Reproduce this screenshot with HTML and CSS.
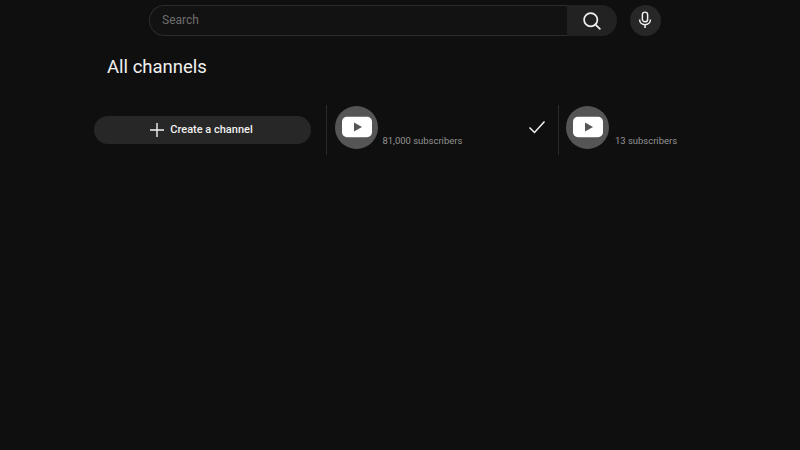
FILE: index.html
```html
<!DOCTYPE html>
<html lang="en">
<head>
<meta charset="utf-8">
<title>All channels</title>
<link rel="stylesheet" href="styles.css">
</head>
<body>
<header class="masthead">
  <div class="searchbox">
    <div class="search-input">Search</div>
    <button class="search-btn" aria-label="Search">
      <svg width="19" height="19" viewBox="0 0 20 20" fill="none" stroke="#f1f1f1" stroke-width="1.8"><circle cx="9.2" cy="9.2" r="7"/><path d="M14 14l4.8 4.8" stroke-linecap="round"/></svg>
    </button>
  </div>
  <button class="mic-btn" aria-label="Voice search">
    <svg width="14" height="18" viewBox="0 0 16 20" fill="none" stroke="#f1f1f1" stroke-width="1.7"><rect x="5" y="1" width="6" height="11" rx="3"/><path d="M1.8 9.5c0 3.4 2.7 5.8 6.2 5.8s6.2-2.4 6.2-5.8M8 15.3V19" /></svg>
  </button>
</header>
<main class="content">
  <h1 class="title">All channels</h1>
  <div class="channels">
    <div class="create-col">
      <button class="create-btn">
        <svg width="16" height="16" viewBox="0 0 16 16" stroke="#f1f1f1" stroke-width="1.4"><path d="M8 1v14M1 8h14"/></svg>
        <span class="create-label">Create a channel</span>
      </button>
    </div>
    <div class="channel channel-wide">
      <div class="avatar">
        <svg width="30" height="22" viewBox="0 0 30 22"><rect width="30" height="20.5" y="0.7" rx="5" fill="#fff"/><path d="M12 6.5l8 4.5-8 4.5z" fill="#555"/></svg>
      </div>
      <div class="subs">81,000 subscribers</div>
      <svg class="check" width="18" height="14" viewBox="0 0 18 14" fill="none" stroke="#f1f1f1" stroke-width="1.5"><path d="M1.5 7.5l5 5L16.5 1.5"/></svg>
    </div>
    <div class="channel channel-last">
      <div class="avatar">
        <svg width="30" height="22" viewBox="0 0 30 22"><rect width="30" height="20.5" y="0.7" rx="5" fill="#fff"/><path d="M12 6.5l8 4.5-8 4.5z" fill="#555"/></svg>
      </div>
      <div class="subs">13 subscribers</div>
    </div>
  </div>
</main>
</body>
</html>
```
FILE: styles.css
```css
* { box-sizing: border-box; }
html, body { margin: 0; height: 100%; }
body {
  background: #0f0f0f;
  color: #f1f1f1;
  font-family: Roboto, "Liberation Sans", sans-serif;
  overflow: hidden;
}
button { border: 0; padding: 0; font: inherit; color: inherit; }
.masthead {
  display: flex;
  align-items: center;
  gap: 13px;
  height: 31px;
  margin-top: 5px;
  padding-left: 149px;
}
.searchbox { display: flex; width: 468px; height: 31px; }
.search-input {
  flex: 1;
  display: flex;
  align-items: center;
  padding: 0 0 2px 12px;
  font-size: 12px;
  color: #6e6e6e;
  background: #121212;
  border: 1px solid #2c2c2c;
  border-right: 0;
  border-radius: 16px 0 0 16px;
}
.search-btn {
  width: 50px;
  display: flex;
  align-items: center;
  justify-content: center;
  padding: 0 2px 1px 0;
  background: #222;
  border-radius: 0 16px 16px 0;
}
.mic-btn {
  width: 31px;
  height: 31px;
  display: flex;
  align-items: center;
  justify-content: center;
  padding: 0 2px 2px 0;
  background: #272727;
  border-radius: 50%;
}
.content { padding-left: 94px; }
.title {
  margin: 19px 0 0 13px;
  height: 24px;
  font-size: 18.5px;
  line-height: 24px;
  font-weight: 400;
  color: #f1f1f1;
}
.channels { display: flex; margin-top: 26px; }
.create-col {
  width: 232px;
  height: 50px;
  padding-right: 15px;
  display: flex;
  align-items: center;
}
.create-btn {
  width: 217px;
  height: 28px;
  display: flex;
  align-items: center;
  justify-content: center;
  gap: 5px;
  padding: 0 3px 1px 0;
  background: #272727;
  border-radius: 14px;
  font-size: 11px;
  font-weight: 500;
}
.create-label { padding-bottom: 1px; }
.channel {
  position: relative;
  display: flex;
  width: 232px;
  height: 50px;
  padding-left: 8px;
  border-left: 1px solid #2a2a2a;
}
.channel-last { padding-left: 7px; }
.avatar {
  flex: none;
  width: 43px;
  height: 43px;
  margin-top: 1px;
  display: flex;
  align-items: center;
  justify-content: center;
  padding-bottom: 2px;
  border-radius: 50%;
  background: #555;
}
.subs {
  margin: 29px 0 0 4.5px;
  font-size: 9.45px;
  line-height: 13px;
  color: #939393;
  white-space: nowrap;
}
.channel-last .subs { margin-left: 6px; }
.check { position: absolute; left: 201px; top: 15px; }
```
